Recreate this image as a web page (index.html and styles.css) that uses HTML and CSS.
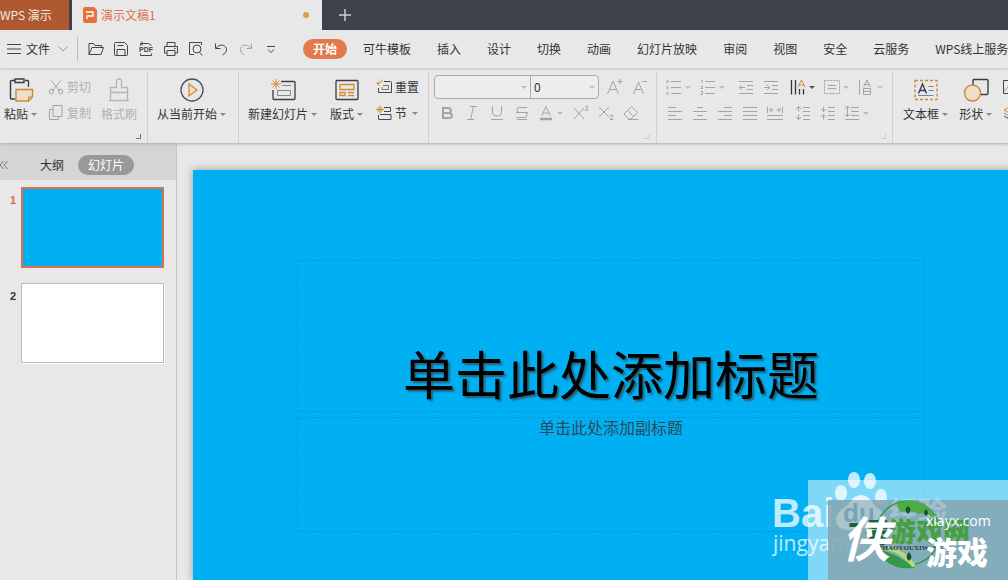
FILE: index.html
```html
<!DOCTYPE html>
<html lang="zh-CN">
<head>
<meta charset="utf-8">
<title>演示文稿1 - WPS 演示</title>
<link rel="stylesheet" href="styles.css">
</head>
<body>
<div class="app">
  <header class="titlebar">
    <button class="home-tab">WPS 演示</button>
    <button class="doc-tab">
      <svg width="14" height="16" viewBox="0 0 14 16"><path d="M2 0h9l3 3v11q0 2-2 2H2q-2 0-2-2V2q0-2 2-2z" fill="#e8703f"/><path d="M3 5h7v4H4v3" fill="none" stroke="#fff" stroke-width="1.3"/></svg>
      <span>演示文稿1</span><i class="unsaved"></i>
    </button>
    <button class="new-tab" aria-label="新建"><svg width="14" height="14" viewBox="0 0 14 14"><path d="M7 1v12M1 7h12" stroke="#d0d1d6" stroke-width="1.5"/></svg></button>
  </header>

  <div class="menubar">
    <button class="file-menu">
      <svg width="15" height="12" viewBox="0 0 15 12"><path d="M0 1.5h14M0 6h14M0 10.5h14" class="ln"/></svg>
      <span>文件</span>
      <svg width="10" height="6" viewBox="0 0 10 6"><path d="M.5.5 5 5 9.500.5" fill="none" stroke="#999"/></svg>
    </button>
    <div class="quick">
      <button aria-label="打开"><svg class="ic" viewBox="0 0 16 16"><path d="M1 13.500V2.500h4.500l1.500 2h6.500v2M1 13.500 4 6.500h11.500l-2.500 7z"/></svg></button>
      <button aria-label="保存"><svg class="ic" viewBox="0 0 16 16"><path d="M1.500 2.500q0-1 1-1h9l3 3v9q0 1-1 1h-11q-1 0-1-1zM4 14V8.500h8V14M4.500 4.500h6"/></svg></button>
      <button aria-label="输出为PDF"><svg class="ic" viewBox="0 0 16 16"><path d="M2.500 4.500V2.500h8l3 2M4 .5v4M2.500 12.500v2h11v-2"/><text x="1" y="11" class="pdf">PDF</text></svg></button>
      <button aria-label="打印"><svg class="ic" viewBox="0 0 16 16"><path d="M4 5V1.500h8V5M4 12H1.500V5.500h13V12H12M4 9.500h8v5H4zM11 7.500h1.500"/></svg></button>
      <button aria-label="打印预览"><svg class="ic" viewBox="0 0 16 16"><path d="M6 13.500H1.500v-12h12V4M11.500 11.500l3 3"/><circle cx="9" cy="8" r="4"/></svg></button>
      <button aria-label="撤销"><svg class="ic" viewBox="0 0 16 16"><path d="M2.500 2.500v5h5M3 7C7 2 13.500 4 13.500 9q0 3-4 5"/></svg></button>
      <button aria-label="恢复"><svg class="ic off" viewBox="0 0 16 16"><path d="M13.500 2.500v5h-5M13 7C9 2 2.500 4 2.500 9q0 3 4 5"/></svg></button>
      <button aria-label="更多"><svg class="ic" viewBox="0 0 16 16"><path d="M4 5.500h8M5 8.500l3 3 3-3"/></svg></button>
    </div>
    <nav class="tabs">
      <button class="active">开始</button><button>可牛模板</button><button>插入</button><button>设计</button><button>切换</button><button>动画</button><button>幻灯片放映</button><button>审阅</button><button>视图</button><button>安全</button><button>云服务</button><button>WPS线上服务</button>
    </nav>
  </div>

  <div class="ribbon">
    <section class="group clipboard">
      <button class="big">
        <svg width="26" height="24" viewBox="0 0 26 24"><path d="M7 2.500H3.500q-1 0-1 1V20q0 1 1 1H7M17 2.500h2.500q1 0 1 1V9" fill="none" stroke="#3c3c46" stroke-width="1.400"/><path d="M7 1h9v3.500H7z" fill="none" stroke="#3c3c46" stroke-width="1.400"/><path d="M8 11.500h16.500V19l-4 4H8z" fill="#f0dfc8" stroke="#c98a35" stroke-width="1.400"/><path d="M20.500 23v-4h4" fill="none" stroke="#c98a35"/></svg>
        <span class="cap">粘贴<i class="dn"></i></span>
      </button>
      <div class="stack">
        <button class="small off"><svg class="ic off" viewBox="0 0 16 16"><path d="M3 1.500 12 12M13 1.500 4 12"/><circle cx="3.500" cy="12.500" r="2.200"/><circle cx="12.500" cy="12.500" r="2.200"/></svg>剪切</button>
        <button class="small off"><svg class="ic off" viewBox="0 0 16 16"><path d="M5 .5h9v11H5zM5 4.500H1.500v10h9v-3"/></svg>复制</button>
      </div>
      <button class="big off">
        <svg width="22" height="24" viewBox="0 0 22 24"><path d="M2.500 21.500v-12h6V3q0-2 2.500-2t2.500 2v6.500h6v12M2.500 14.500h17M1 22.500h20" fill="none" stroke="#b4b4b4" stroke-width="1.300"/></svg>
        <span class="cap">格式刷</span>
      </button>
      <i class="launch dark"></i>
    </section>

    <section class="group play">
      <button class="big">
        <svg width="24" height="24" viewBox="0 0 24 24"><circle cx="12" cy="12" r="11" fill="none" stroke="#50525e" stroke-width="1.300"/><path d="M9 6v12l8-6z" fill="#f0dfc8" stroke="#d08b35" stroke-width="1.300"/></svg>
        <span class="cap">从当前开始<i class="dn"></i></span>
      </button>
    </section>

    <section class="group slides">
      <button class="big">
        <svg width="26" height="24" viewBox="0 0 26 24"><path d="M11 3.500h13q1 0 1 1v16q0 1-1 1H4q-1 0-1-1V12" fill="none" stroke="#3c3c46" stroke-width="1.300"/><path d="M12 7.500h9M7.500 12.500h13v5h-13z" fill="none" stroke="#85858d"/><path d="M6 1v10M1 6h10M2.500 2.500l7 7M9.500 2.500l-7 7" stroke="#d08b35"/></svg>
        <span class="cap">新建幻灯片<i class="dn"></i></span>
      </button>
      <button class="big">
        <svg width="24" height="24" viewBox="0 0 24 24"><rect x="1" y="2.500" width="22" height="19" rx="1" fill="none" stroke="#3c3c46" stroke-width="1.300"/><path d="M5 6.500h14v5H5zM5 14.500h5v3H5zM13 14.500h6M13 17.500h6" fill="none" stroke="#d08b35" stroke-width="1.300"/></svg>
        <span class="cap">版式<i class="dn"></i></span>
      </button>
      <div class="stack">
        <button class="small"><svg class="ic" viewBox="0 0 16 16"><path d="M8 2.500h6.500q1 0 1 1v10H2.500V9"/><path d="M7 6.500h5.500v4H6V8" stroke="#777"/><path d="M3.500 2 1 4.500 3.500 7M1 4.500q5 0 5-4" class="or"/></svg>重置</button>
        <button class="small"><svg class="ic" viewBox="0 0 16 16"><path d="M8 2.500h6.500v4H8M2.500 10v4M4 9.500h11v5H2.500"/><path d="M4 .5v8M0 4.500h8M1.500 2l5 5M6.500 2l-5 5" class="or"/></svg>节<i class="dn"></i></button>
      </div>
    </section>

    <section class="group font off">
      <div class="row">
        <div class="combo">
          <span class="pick wide"><select aria-label="字体"><option></option></select></span>
          <span class="pick"><select aria-label="字号"><option>0</option></select></span>
        </div>
        <button aria-label="增大字号"><svg class="ic" viewBox="0 0 16 16"><path d="M.5 15 6 2l5.500 13M2.500 10.500h7M10.500 2.500h5M13 0v5"/></svg></button>
        <button aria-label="减小字号"><svg class="ic" viewBox="0 0 16 16"><path d="M1.500 15 6.500 3l5 12M3 10.500h7M10.500 2.500H15"/></svg></button>
      </div>
      <div class="row">
        <button aria-label="加粗"><svg class="ic" viewBox="0 0 16 16"><path d="M4 3h5q3 0 3 2.500T9 8H4zM4 8h5.500q3.500 0 3.500 2.500T9.500 13H4z" stroke-width="2"/></svg></button>
        <button aria-label="倾斜"><svg class="ic" viewBox="0 0 16 16"><path d="M6 1.500h7M3 14.500h7M9.500 1.500l-3 13"/></svg></button>
        <button aria-label="下划线"><svg class="ic" viewBox="0 0 16 16"><path d="M3.500 1v6q0 4 4.500 4t4.500-4V1M2 14.500h12"/></svg></button>
        <button aria-label="删除线"><svg class="ic" viewBox="0 0 16 16"><path d="M13 2.500H5q-2 0-2 2.500t2 2.500h6q2 0 2 2.500t-2 2.500H2.500M2 7.500h12M3 14.500h10"/></svg></button>
        <button class="dd" aria-label="字体颜色"><svg class="ic" viewBox="0 0 16 16"><path d="M3.500 11 8 1.500l4.500 9.500M5 8h6"/><path d="M2 14h12" stroke-width="2.500"/></svg><i class="dn"></i></button>
        <button aria-label="上标"><svg class="ic" viewBox="0 0 16 16"><path d="M1 3l10 11M11 3 1 14M12 2q2-2 3 0 0 1-3 3h3.500"/></svg></button>
        <button aria-label="下标"><svg class="ic" viewBox="0 0 16 16"><path d="M1 2l10 10M11 2 1 12M12 11q2-2 3 0 0 1-3 3.500h3.500"/></svg></button>
        <button aria-label="清除格式"><svg class="ic" viewBox="0 0 16 16"><path d="M1 9 8.500 1.500l6 6L8 14H5.500zM4.500 5.500l6 6M5 14.500h10"/></svg></button>
      </div>
      <i class="launch"></i>
    </section>

    <section class="group para off">
      <div class="row">
        <button class="dd" aria-label="项目符号"><svg class="ic" viewBox="0 0 16 16"><path d="M5 2.500h10M5 8.500h10M5 14.500h10"/><circle cx="1.500" cy="2.500" r="1"/><circle cx="1.500" cy="8.500" r="1"/><circle cx="1.500" cy="14.500" r="1"/></svg><i class="dn"></i></button>
        <button class="dd gap" aria-label="编号"><svg class="ic" viewBox="0 0 16 16"><path d="M5 2.500h10M5 8.500h10M5 14.500h10M1 1h1v3M.5 7.500h2v2h-2M.5 12.500h2v3h-2"/></svg><i class="dn"></i></button>
        <button aria-label="减少缩进"><svg class="ic" viewBox="0 0 16 16"><path d="M1 2.500h14M9 6.500h6M9 10.500h6M1 14.500h14M7 8.500H1.500M4 6 1.500 8.500 4 11"/></svg></button>
        <button class="gap" aria-label="增加缩进"><svg class="ic" viewBox="0 0 16 16"><path d="M1 2.500h14M9 6.500h6M9 10.500h6M1 14.500h14M1 8.500h5.500M4 6l2.500 2.500L4 11"/></svg></button>
        <button class="dd live" aria-label="文字方向"><svg class="ic" viewBox="0 0 16 16"><path d="M1.500 1v14.500M5.500 1v14.500M9.500 10v5.500M13.500 10v5.500" stroke-width="1.300"/><path d="M8 8l3.500-7L15 8M9 6h5" class="or"/></svg><i class="dn"></i></button>
        <button class="dd" aria-label="对齐文本"><svg class="ic" viewBox="0 0 16 16"><path d="M.5 1.500h15v13H.5z" stroke-dasharray="2 1"/><path d="M4 6.500h8M4 9.500h8"/></svg><i class="dn"></i></button>
        <button class="dd" aria-label="转换"><svg class="ic" viewBox="0 0 16 16"><path d="M1.500 1v14.500M5.500 8 9 1l3.500 7M6.500 5.500h5M5.500 9.500h7v6h-7zM5.500 12.500h7"/></svg><i class="dn"></i></button>
      </div>
      <div class="row">
        <button aria-label="左对齐"><svg class="ic" viewBox="0 0 16 16"><path d="M1 2.500h8M1 6.500h14M1 10.500h8M1 14.500h14"/></svg></button>
        <button aria-label="居中"><svg class="ic" viewBox="0 0 16 16"><path d="M5 2.500h6M1 6.500h14M5 10.500h6M1 14.500h14"/></svg></button>
        <button aria-label="右对齐"><svg class="ic" viewBox="0 0 16 16"><path d="M7 2.500h8M1 6.500h14M7 10.500h8M1 14.500h14"/></svg></button>
        <button aria-label="两端对齐"><svg class="ic" viewBox="0 0 16 16"><path d="M1 2.500h14M1 6.500h14M1 10.500h14M1 14.500h14"/></svg></button>
        <button class="gap" aria-label="分散对齐"><svg class="ic" viewBox="0 0 16 16"><path d="M.5 2v6M15.500 2v6M2.500 5h4M9.500 5h4M5 3 2.500 5 5 7M11 3l2.500 2L11 7M0 10.500h16M0 14.500h16"/></svg></button>
        <button aria-label="增大段距"><svg class="ic" viewBox="0 0 16 16"><path d="M8 2.500h7M8 6.500h7M8 10.500h7M8 14.500h7M3.500 1.500v5M1 4l2.500-2.500L6 4M3.500 9.500v5M1 12l2.500 2.500L6 12"/></svg></button>
        <button aria-label="减小段距"><svg class="ic" viewBox="0 0 16 16"><path d="M8 2.500h7M8 6.500h7M8 10.500h7M8 14.500h7M3.500 1.500v5M1 4l2.500 2.500L6 4M3.500 9.500v5M1 12l2.500-2.500L6 12"/></svg></button>
        <button class="dd" aria-label="行距"><svg class="ic" viewBox="0 0 16 16"><path d="M7 2.500h8M7 6.500h8M7 10.500h8M1 14.500h14M3.500 1v10.500M1 3.500 3.500 1 6 3.500M1 9l2.500 2.500L6 9"/></svg><i class="dn"></i></button>
      </div>
      <i class="launch"></i>
    </section>

    <section class="group insert">
      <button class="big">
        <svg width="24" height="24" viewBox="0 0 24 24"><rect x="1" y="2.500" width="22" height="19" fill="none" stroke="#c98a35" stroke-width="1.400" stroke-dasharray="3 2"/><path d="M4.500 15.500 8.500 6l4 9.500M6 12.500h5" fill="none" stroke="#3c3c46" stroke-width="1.400"/><path d="M14.500 8.500h5M14.500 12.500h5M4 17.500h15.500" stroke="#6a83a3"/></svg>
        <span class="cap">文本框<i class="dn"></i></span>
      </button>
      <button class="big">
        <svg width="26" height="24" viewBox="0 0 26 24"><rect x="10" y="1.500" width="15" height="15" rx="1" fill="none" stroke="#3c3c46" stroke-width="1.400"/><circle cx="9.500" cy="15" r="8" fill="#f0dfc8" stroke="#c98a35" stroke-width="1.400"/></svg>
        <span class="cap">形状<i class="dn"></i></span>
      </button>
      <div class="stack">
        <button class="small" aria-label="图片"><svg class="ic" viewBox="0 0 16 16"><path d="M.5 1.500h15v13H.5z"/><path d="M1 12l4-4 4 4 3-3 3 3" class="or"/></svg></button>
        <button class="small" aria-label="排列"><svg class="ic" viewBox="0 0 16 16"><path d="M1 5l7-4 7 4-7 4zM1 8l7 4 7-4" class="or"/><path d="M1 11l7 4 7-4"/></svg></button>
      </div>
    </section>
  </div>

  <main class="work">
    <aside class="side">
      <div class="side-head">
        <button class="collapse" aria-label="收起"><svg width="8" height="8" viewBox="0 0 8 8"><path d="M3.500 0 0 4l3.500 4M7.500 0 4 4l3.500 4" fill="none" stroke="#777"/></svg></button>
        <button class="view">大纲</button>
        <button class="view on">幻灯片</button>
      </div>
      <ol class="thumbs">
        <li class="sel"><span>1</span><div class="thumb"></div></li>
        <li><span>2</span><div class="thumb"></div></li>
      </ol>
    </aside>
    <div class="stage">
      <div class="slide">
        <h1 class="holder title">单击此处添加标题</h1>
        <p class="holder sub">单击此处添加副标题</p>
      </div>
    </div>
    <svg class="mark" width="248" height="120" viewBox="0 0 248 120">
      <g fill="#fff" opacity=".75">
        <text x="12" y="67" class="baidu">Bai</text>
        <ellipse cx="94" cy="20" rx="6" ry="8"/><ellipse cx="110" cy="21" rx="6" ry="8"/><ellipse cx="81" cy="33" rx="6" ry="8"/><ellipse cx="121" cy="37" rx="6" ry="8"/>
        <path d="M101 35c-9 0-11 9-19 14-9 7-8 20 5 21 6 0 9-2 14-2s8 2 14 2c13-1 13-14 4-21-7-5-9-14-18-14z"/>
        <text x="13" y="91" class="url">jingyan.baidu</text>
      </g>
      <path d="M48 20h200v100H48z" fill="#fff" opacity=".5"/>
      <path d="M68 40h180v80H68z" fill="#84a6b2" opacity=".88"/>
      <g fill="#fff" opacity=".25">
        <path d="M101 36c-9 0-11 9-19 13-9 7-8 20 5 21 6 0 9-2 14-2s8 2 14 2c13-1 13-14 4-21-7-5-9-13-18-13z"/>
        <text x="129" y="63" class="jy">经验</text>
      </g>
      <text x="83" y="62" class="du">du</text>
      <circle cx="148" cy="73" r="32" fill="none" stroke="#329a49" stroke-width="1.500"/>
      <path d="M137 44q16-9 31 4l8 11q-10-7-17-5-9-5-17-2-5-2-5-8z" fill="#4fab43"/>
      <path d="M120 90q14 2 35 18-19 2-29-7z" fill="#329a49"/><path d="M128 88q16 4 26 18" fill="none" stroke="#b9db75" stroke-width="4"/>
      <path d="M148 46q5 4 0 8-5-4 0-8M166 49q4 4 0 7-4-3 0-7M149 92q5 5 0 9-5-4 0-9" fill="#14572d"/>
      <text x="88" y="83" class="seven">7号</text>
      <text x="129" y="82" class="green">游戏网</text>
      <text x="119" y="90" class="pinyin">7HAOYOUXIWANG</text>
      <text x="82" y="97" class="brush">侠</text>
      <text x="166" y="66" class="site">xiayx.com</text>
      <text x="166" y="104" class="game">游戏</text>
    </svg>
  </main>
</div>
</body>
</html>
```

FILE: styles.css
```css
* { box-sizing: border-box; }

body {
  margin: 0;
  overflow: hidden;
  background: #e8e8e8;
  color: #333;
  font: 12px/16px "Noto Sans CJK SC", sans-serif;
}

button {
  display: flex;
  align-items: center;
  flex: none;
  padding: 0;
  border: 0;
  background: none;
  color: inherit;
  font: inherit;
  white-space: nowrap;
}

svg { flex: none; }

.app {
  display: flex;
  flex-direction: column;
  height: 100vh;
  overflow: hidden;
}

/* Title bar */
.titlebar {
  display: flex;
  flex: none;
  height: 30px;
  background: #3f414d;
}

.home-tab {
  width: 69px;
  margin-right: 3px;
  background: #ae5930;
  color: #f4e9e3;
}

.doc-tab {
  width: 250px;
  gap: 4px;
  padding: 0 13px 0 11px;
  background: #e8e8e8;
  color: #df7349;
}

.unsaved {
  width: 6px;
  height: 6px;
  margin-left: auto;
  border-radius: 50%;
  background: #d99a4b;
}

.new-tab { padding: 0 16px; }

/* Menu bar */
.menubar {
  display: flex;
  align-items: center;
  flex: none;
  height: 40px;
  overflow: hidden;
  border-bottom: 2px solid #dadada;
}

.file-menu {
  gap: 4px;
  height: 24px;
  padding: 0 9px 0 7px;
  border-right: 1px solid #bbb;
}

.file-menu span { margin-right: 4px; }

.quick {
  display: flex;
  padding-left: 5px;
}

.quick button, .row button {
  justify-content: center;
  width: 25px;
  height: 26px;
}

.ic, .ln {
  fill: none;
  stroke: #44454d;
}

.ic {
  width: 16px;
  height: 16px;
}

.ic.off, .off .ic { stroke: #a4a4a4; }
.ic .or, .off .ic .or { stroke: #d08b35; }

.pdf {
  fill: #44454d;
  stroke: none;
  font: bold 7px/8px "Liberation Sans", sans-serif;
}

.tabs {
  display: flex;
  gap: 26px;
  margin-left: 20px;
}

.tabs .active {
  height: 20px;
  margin-right: -10px;
  padding: 0 10px;
  border-radius: 10px;
  background: #e37a4c;
  color: #fff;
  font-weight: bold;
}

/* Ribbon */
.ribbon {
  position: relative;
  z-index: 1;
  display: flex;
  flex: none;
  height: 73px;
  padding-top: 2px;
  background: #e8e8e8;
  box-shadow: 0 1px 3px #aaa;
}

.group {
  position: relative;
  display: flex;
  align-items: flex-start;
  flex: none;
  padding: 2px 0 0;
  border-right: 1px solid #d0d0d0;
}

.big {
  flex-direction: column;
  gap: 4px;
  padding-top: 4px;
}

.big.off, .small.off { color: #b0b0b0; }

.cap {
  display: flex;
  align-items: center;
  gap: 3px;
}

.dn {
  flex: none;
  border: 3px solid transparent;
  border-top-color: #888;
  border-bottom: 0;
}

.small {
  gap: 3px;
  height: 26px;
}

.small .dn { margin-left: 2px; }

.clipboard { padding: 2px 10px 0 4px; }
.clipboard .stack { margin: 0 10px 0 11px; }
.play { padding: 2px 12px 0 9px; }
.slides { gap: 13px; padding: 2px 9px 0; }
.insert { gap: 11px; padding: 2px 0 0 10px; border: 0; }

.launch {
  position: absolute;
  right: 6px;
  bottom: 4px;
  width: 5px;
  height: 5px;
  border: solid #ccc;
  border-width: 0 1px 1px 0;
}

.launch.dark { border-color: #777; }

.row { display: flex; }

.font, .para {
  flex-direction: column;
  padding: 2px 4px 0 5px;
}

.row .dd {
  justify-content: flex-start;
  gap: 3px;
  width: 34px;
  padding-left: 4px;
}

.off .dn { border-top-color: #bbb; }
.row .gap { margin-right: 3px; }
.off .live .ic { stroke: #33343d; }
.off .live .dn { border-top-color: #555; }

.combo {
  display: flex;
  height: 24px;
  margin: 1px 3px 0 0;
  border: 1px solid #aaa;
  border-radius: 4px;
  background: #ededed;
}

.pick {
  display: flex;
  align-items: center;
  width: 67px;
  padding-right: 3px;
}

.pick.wide {
  width: 96px;
  border-right: 1px solid #aaa;
}

.pick select {
  flex: 1;
  min-width: 0;
  padding: 0 3px;
  border: 0;
  appearance: none;
  background: none;
  color: #333;
  font: inherit;
}

.pick::after {
  content: "";
  border: 3px solid transparent;
  border-top-color: #bbb;
  border-bottom: 0;
}

/* Work area */
.work {
  position: relative;
  display: flex;
  flex: 1;
  min-height: 0;
  overflow: hidden;
}

.side {
  flex: none;
  width: 177px;
  border-right: 1px solid #c6c6c6;
}

.side-head {
  display: flex;
  align-items: center;
  height: 37px;
  padding-top: 6px;
  background: #d5d5d5;
}

.collapse { margin-right: 32px; }

.view { height: 20px; }

.view.on {
  margin-left: 14px;
  padding: 0 10px;
  border-radius: 10px;
  background: #999;
  color: #fff;
}

.thumbs {
  display: flex;
  flex-direction: column;
  gap: 15px;
  margin: 0;
  padding: 7px 12px 0 10px;
  list-style: none;
}

.thumbs li {
  display: flex;
  gap: 4px;
  font: bold 11px/14px "Liberation Sans", sans-serif;
}

.thumbs span {
  width: 7px;
  padding-top: 6px;
}

.thumbs .sel { color: #e0683c; }

.thumb {
  flex: 1;
  height: 80px;
  border: 1px solid #bbb;
  background: #fff;
  box-shadow: 1px 1px #fff;
}

.sel .thumb {
  height: 81px;
  border: 2px solid #dc7146;
  background: #00b0f0;
  box-shadow: none;
}

.stage {
  flex: 1;
  min-width: 0;
  padding: 27px 0 0 16px;
}

.slide {
  height: 100%;
  margin-right: -21px;
  padding: 90px 104px 0;
  background: #00b0f2;
  box-shadow: 0 0 8px #999;
}

.holder {
  display: flex;
  justify-content: center;
  margin: 0;
  border: 1px dashed #0499d6;
}

.title {
  align-items: flex-end;
  height: 152px;
  margin-bottom: 5px;
  color: #000;
  font-size: 52px;
  font-weight: normal;
  line-height: 76px;
  text-shadow: 2px 2px 2px #246079;
}

.sub {
  height: 115px;
  color: #2b4b59;
  font-size: 16px;
  line-height: 18px;
}

/* Watermarks over the slide */
.mark {
  position: absolute;
  right: 0;
  bottom: 0;
}

.baidu { font: bold 40px "Liberation Sans", sans-serif; }
.jy { font: bold 29px "Noto Sans CJK SC", sans-serif; }
.url { font: 21px "Open Sans", sans-serif; }
.du { fill: #78a5b5; font: bold 26px "Liberation Sans", sans-serif; }
.seven { fill: #1d6136; font: 900 27px "Noto Sans CJK SC", sans-serif; }
.green { fill: #46a040; font: 900 27px "Noto Sans CJK SC", sans-serif; }
.pinyin { fill: #263c35; font: bold 7px "Liberation Serif", serif; }
.brush { fill: #fff; font: italic bold 48px "Noto Sans CJK SC", sans-serif; }
.site { fill: #fff; font: 14px "Open Sans", sans-serif; }
.game { fill: #fff; font: 900 31px "Noto Sans CJK SC", sans-serif; }
```
